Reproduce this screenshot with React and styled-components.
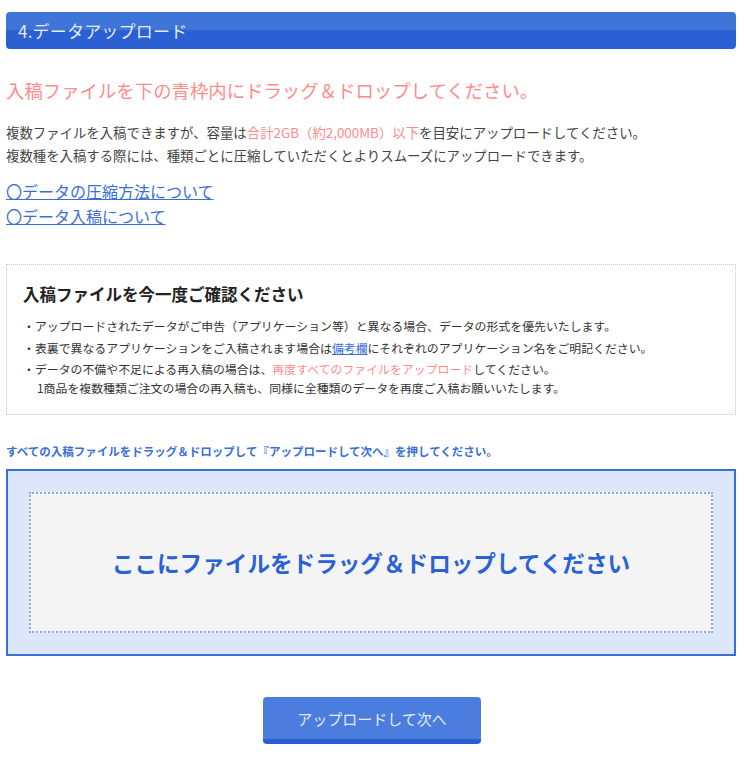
import React from "react";
import styled, { createGlobalStyle } from "styled-components";

const GlobalStyle = createGlobalStyle`
  body {
    margin: 0;
    background: #fff;
    font-family: "Noto Sans CJK JP", "Noto Sans", sans-serif;
    color: #444;
  }
`;

const App = () => {
  return (
    <Page>
      <GlobalStyle />
      <SectionHeader>4.データアップロード</SectionHeader>

      <Lead>入稿ファイルを下の青枠内にドラッグ＆ドロップしてください。</Lead>

      <Intro>
        複数ファイルを入稿できますが、容量は<Accent>合計2GB（約2,000MB）以下</Accent>
        を目安にアップロードしてください。
        <br />
        複数種を入稿する際には、種類ごとに圧縮していただくとよりスムーズにアップロードできます。
      </Intro>

      <LinkList>
        <GuideLink href="#">〇データの圧縮方法について</GuideLink>
        <GuideLink href="#">〇データ入稿について</GuideLink>
      </LinkList>

      <ConfirmBox>
        <ConfirmTitle>入稿ファイルを今一度ご確認ください</ConfirmTitle>
        <Note>
          ・アップロードされたデータがご申告（アプリケーション等）と異なる場合、データの形式を優先いたします。
        </Note>
        <Note>
          ・表裏で異なるアプリケーションをご入稿されます場合は<NoteLink href="#">備考欄</NoteLink>
          にそれぞれのアプリケーション名をご明記ください。
        </Note>
        <Note>
          ・データの不備や不足による再入稿の場合は、
          <Accent>再度すべてのファイルをアップロード</Accent>
          してください。
          <br />
          <Indent>
            1商品を複数種類ご注文の場合の再入稿も、同様に全種類のデータを再度ご入稿お願いいたします。
          </Indent>
        </Note>
      </ConfirmBox>

      <Instruction>
        すべての入稿ファイルをドラッグ＆ドロップして『アップロードして次へ』を押してください。
      </Instruction>

      <DropArea>
        <DropInner>ここにファイルをドラッグ＆ドロップしてください</DropInner>
      </DropArea>

      <Actions>
        <NextButton type="button">アップロードして次へ</NextButton>
      </Actions>
    </Page>
  );
};

const Page = styled.div`
  padding: 12px 8px 24px 6px;
  width: 730px;
`;

const SectionHeader = styled.h2`
  margin: 0;
  height: 37px;
  box-sizing: border-box;
  padding: 0 12px;
  display: flex;
  align-items: center;
  border-radius: 4px;
  background: linear-gradient(#3f74d8 0, #3f74d8 50%, #2a60d3 50%, #2a60d3 100%);
  color: #e4ebf8;
  font-size: 17px;
  font-weight: normal;
  letter-spacing: 0.2px;
`;

const Lead = styled.p`
  margin: 27px 0 0;
  font-size: 18.4px;
  line-height: 28px;
  color: #ff8b8b;
`;

const Intro = styled.p`
  margin: 17px 0 0;
  font-size: 13.4px;
  line-height: 23px;
  color: #444;
`;

const Accent = styled.span`
  color: #ff8b8b;
`;

const LinkList = styled.div`
  margin-top: 12px;
  display: flex;
  flex-direction: column;
  align-items: flex-start;
`;

const GuideLink = styled.a`
  font-size: 16px;
  line-height: 25px;
  color: #3a6fd8;
  text-decoration: underline;
`;

const ConfirmBox = styled.div`
  margin-top: 35px;
  border: 1px dotted #c8c8c8;
  padding: 16px 16px 18px;
  height: 151px;
  box-sizing: border-box;
`;

const ConfirmTitle = styled.h3`
  margin: 0 0 10px;
  font-size: 16.5px;
  line-height: 26px;
  font-weight: bold;
  color: #222;
`;

const Note = styled.p`
  margin: 0 0 3px;
  font-size: 11.9px;
  line-height: 18.5px;
  color: #333;
`;

const NoteLink = styled.a`
  color: #3a6fd8;
  text-decoration: underline;
`;

const Indent = styled.span`
  padding-left: 14px;
`;

const Instruction = styled.p`
  margin: 28px 0 0;
  font-size: 11.5px;
  line-height: 16px;
  font-weight: bold;
  color: #3a6fd8;
`;

const DropArea = styled.div`
  margin-top: 10px;
  height: 187px;
  box-sizing: border-box;
  padding: 21px 21px;
  background: #dde7fc;
  border: 2px solid #3a6fd8;
`;

const DropInner = styled.div`
  height: 100%;
  box-sizing: border-box;
  display: flex;
  align-items: center;
  justify-content: center;
  background: #f4f4f4;
  border: 2px dotted #8aa9ea;
  color: #2a62d6;
  font-size: 22.6px;
  font-weight: bold;
`;

const Actions = styled.div`
  margin-top: 41px;
  display: flex;
  justify-content: center;
`;

const NextButton = styled.button`
  width: 218px;
  height: 47px;
  margin-left: 2px;
  border: none;
  border-radius: 4px;
  background: #4a7ddd;
  border-bottom: 5px solid #2a5fd2;
  color: #e4ebf8;
  font-family: "Noto Sans CJK JP", sans-serif;
  font-size: 15px;
  padding: 0;
  cursor: pointer;
`;

export default App;
